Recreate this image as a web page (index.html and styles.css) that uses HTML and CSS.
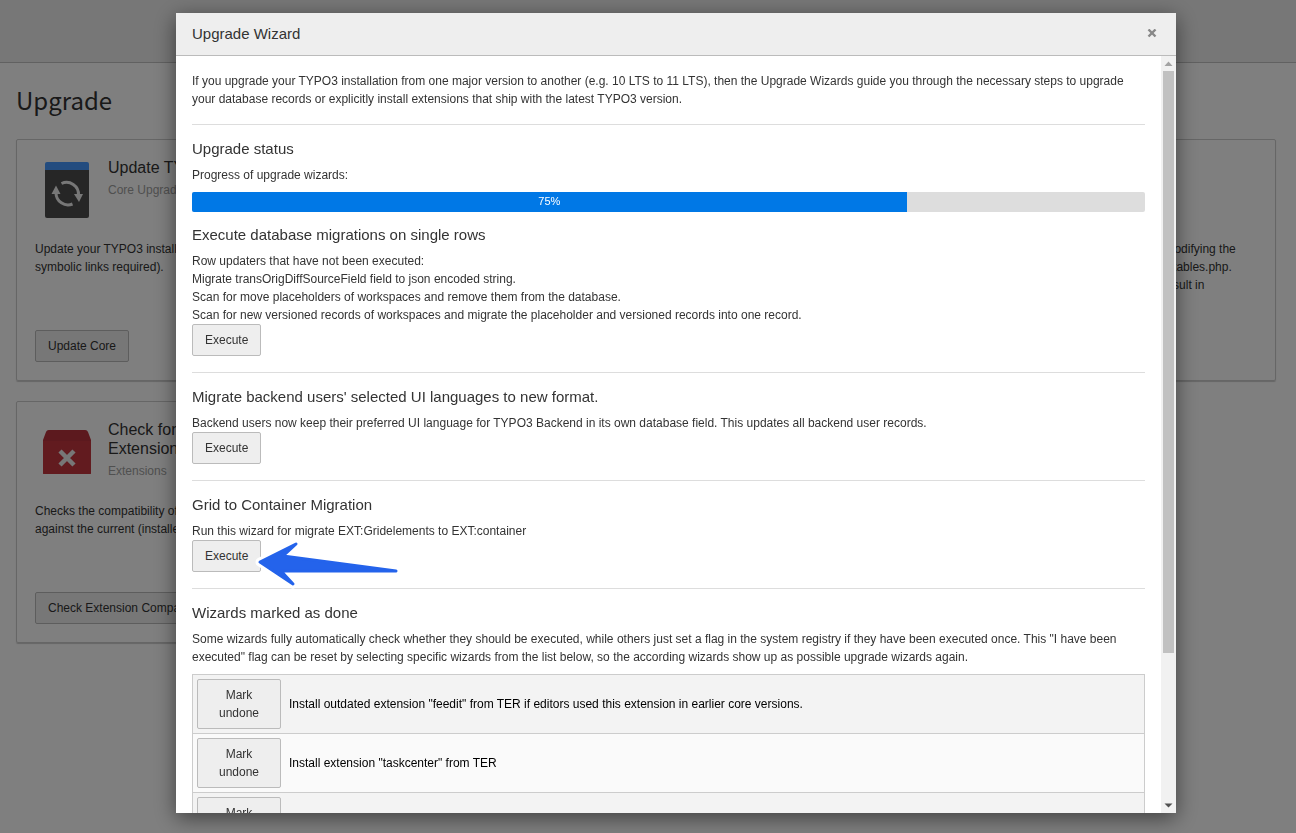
FILE: index.html
```html
<!DOCTYPE html>
<html lang="en">
<head>
    <meta charset="UTF-8">
    <meta name="viewport" content="width=device-width, initial-scale=1.0">
    <title>Upgrade</title>
    <link rel="stylesheet" href="styles.css">
</head>
<body>

    <div class="docheader"></div>

    <main class="module">
        <h1>Upgrade</h1>
        <div class="cards">
            <div class="card">
                <div class="card-header">
                    <svg class="card-icon" viewBox="0 0 64 64">
                        <path fill="#4d4d4d" d="M10 12h44v46a2 2 0 0 1-2 2H12a2 2 0 0 1-2-2z"/>
                        <path fill="#4799ff" d="M12 4h40a2 2 0 0 1 2 2v6H10V6a2 2 0 0 1 2-2z"/>
                        <g fill="none" stroke="#eee" stroke-width="3">
                            <path d="M26.500 25.500A12 12 0 0 1 43.500 37"/>
                            <path d="M37.500 46A12 12 0 0 1 21 35"/>
                        </g>
                        <path fill="#eee" d="M39 36h9L44 44zM16.500 36h9L21 27.500z"/>
                    </svg>
                    <div>
                        <h2>Update TYPO3 Core</h2>
                        <p class="card-sub">Core Upgrade</p>
                    </div>
                </div>
                <p class="card-text">Update your TYPO3 installation (no<br>symbolic links required).</p>
                <button class="btn">Update Core</button>
            </div>
            <div class="card card-last">
                <p class="card-text card-text-only">Checks if each extension is still modifying the<br>table configuration (TCA) via ext_tables.php.<br>Those later changes to it might result in</p>
            </div>
            <div class="card">
                <div class="card-header">
                    <svg class="card-icon" viewBox="0 0 64 64">
                        <path fill="#b9323c" d="M14 10h36a3 3 0 0 1 3 2l3 8v33a1 1 0 0 1-1 1H9a1 1 0 0 1-1-1V20l3-8a3 3 0 0 1 3-2z"/>
                        <path fill="#c4363f" d="M8 21h48v32a1 1 0 0 1-1 1H9a1 1 0 0 1-1-1z"/>
                        <path stroke="#eee" stroke-width="4.500" d="M25 31l14 14M39 31L25 45"/>
                    </svg>
                    <div>
                        <h2>Check for Broken Extensions</h2>
                        <p class="card-sub">Extensions</p>
                    </div>
                </div>
                <p class="card-text">Checks the compatibility of extensions<br>against the current (installed) version.</p>
                <button class="btn">Check Extension Compatibility</button>
            </div>
        </div>
    </main>

    <div class="backdrop">
        <div class="modal" role="dialog" aria-labelledby="modal-title">
            <div class="modal-header">
                <h4 id="modal-title">Upgrade Wizard</h4>
                <button class="close" aria-label="Close">
                    <svg width="10" height="10" viewBox="0 0 10 10"><path stroke="#888" stroke-width="2.4" d="M1.500 .5l7 7M8.500 .5l-7 7"/></svg>
                </button>
            </div>
            <div class="modal-main">
                <div class="modal-body">
                    <p>If you upgrade your TYPO3 installation from one major version to another (e.g. 10 LTS to 11 LTS), then the Upgrade Wizards guide you through the necessary steps to upgrade your database records or explicitly install extensions that ship with the latest TYPO3 version.</p>
                    <hr>
                    <h3>Upgrade status</h3>
                    <p>Progress of upgrade wizards:</p>
                    <div class="progress">
                        <div class="progress-bar" role="progressbar" aria-valuenow="75" style="width: 75%">75%</div>
                    </div>

                    <h3>Execute database migrations on single rows</h3>
                    <p>Row updaters that have not been executed:<br>
                    Migrate transOrigDiffSourceField field to json encoded string.<br>
                    Scan for move placeholders of workspaces and remove them from the database.<br>
                    Scan for new versioned records of workspaces and migrate the placeholder and versioned records into one record.</p>
                    <button class="btn">Execute</button>
                    <hr>

                    <h3>Migrate backend users' selected UI languages to new format.</h3>
                    <p>Backend users now keep their preferred UI language for TYPO3 Backend in its own database field. This updates all backend user records.</p>
                    <button class="btn">Execute</button>
                    <hr>

                    <h3>Grid to Container Migration</h3>
                    <p>Run this wizard for migrate EXT:Gridelements to EXT:container</p>
                    <div class="pointed">
                        <button class="btn">Execute</button>
                        <svg class="arrow" viewBox="0 0 150 54">
                            <path class="arrow-halo" d="M8 24L44 6L31 18L144 33L29 33L41 46Z"/>
                            <path class="arrow-line" d="M8 24L44 6L31 18L144 33L29 33L41 46Z"/>
                        </svg>
                    </div>
                    <hr>

                    <h3>Wizards marked as done</h3>
                    <p>Some wizards fully automatically check whether they should be executed, while others just set a flag in the system registry if they have been executed once. This "I have been executed" flag can be reset by selecting specific wizards from the list below, so the according wizards show up as possible upgrade wizards again.</p>
                    <table class="done">
                        <tr>
                            <td class="done-action"><button class="btn">Mark undone</button></td>
                            <td>Install outdated extension "feedit" from TER if editors used this extension in earlier core versions.</td>
                        </tr>
                        <tr>
                            <td class="done-action"><button class="btn">Mark undone</button></td>
                            <td>Install extension "taskcenter" from TER</td>
                        </tr>
                        <tr>
                            <td class="done-action"><button class="btn">Mark undone</button></td>
                            <td></td>
                        </tr>
                    </table>
                </div>
                <div class="scrollbar" aria-hidden="true">
                    <svg width="15" height="15" viewBox="0 0 15 15"><path fill="#a3a3a3" d="M7.500 5.500l4 4.500h-8z"/></svg>
                    <div class="scroll-track"><div class="scroll-thumb"></div></div>
                    <svg width="15" height="15" viewBox="0 0 15 15"><path fill="#505050" d="M7.500 9.500l-4-4h8z"/></svg>
                </div>
            </div>
        </div>
    </div>

</body>
</html>
```
FILE: styles.css
```css
* { box-sizing: border-box; }
body { margin: 0; height: 100vh; overflow: hidden; font-family: "Liberation Sans", Arial, sans-serif; font-size: 12px; line-height: 18px; color: #333; background: #fff; }
h1, h2, h3, h4, p { margin: 0; font-weight: normal; }

.btn { font: inherit; color: #333; background: #eee; border: 1px solid #bbb; border-radius: 2px; padding: 6px 12px; white-space: nowrap; }

/* module behind the modal */
.docheader { height: 63px; background: #eee; border-bottom: 1px solid #c3c3c3; }
.module { padding: 20px 20px 0 16px; }
h1 { font-family: "Noto Sans CJK SC", "Noto Sans", sans-serif; font-size: 24px; line-height: 34px; margin-bottom: 22px; }
.cards { display: grid; grid-template-columns: repeat(4, 1fr); gap: 20px; }
.card { min-width: 0; border: 1px solid #ccc; border-radius: 2px; box-shadow: 0 1px 1px #ccc; padding: 18px; }
.card-last { grid-column: 4; }
.card-header { display: flex; gap: 9px; height: 64px; margin-bottom: 18px; }
.card-icon { width: 64px; height: 64px; flex: none; }
h2 { font-size: 16px; line-height: 19px; margin-bottom: 4px; }
.card-sub { color: #a0a0a0; }
.card-text { min-height: 90px; white-space: nowrap; }
.card-text-only { margin-top: 82px; }

/* modal */
.backdrop { position: fixed; inset: 0; display: flex; padding: 13px 120px 20px 176px; background: rgba(0, 0, 0, 0.5); }
.modal { flex: 1; min-width: 0; display: flex; flex-direction: column; background: #fff; box-shadow: 0 5px 20px rgba(0, 0, 0, 0.5); }
.modal-header { display: flex; align-items: center; justify-content: space-between; padding: 12px 16px; background: #eee; border-bottom: 1px solid #bbb; }
h4 { font-size: 15px; }
.close { display: flex; padding: 3px; border: 0; background: none; }
.modal-main { flex: 1; min-height: 0; display: flex; }
.modal-body { flex: 1; min-width: 0; padding: 16px; overflow-y: auto; scrollbar-width: none; }
h3 { font-size: 15px; line-height: 16px; margin-bottom: 9px; }
hr { margin: 16px 0; border: 0; border-top: 1px solid #ddd; }
.modal-body .btn { display: block; }

.progress { height: 20px; margin: 8px 0 15px; background: #ddd; border-radius: 2px; overflow: hidden; }
.progress-bar { height: 20px; background: #0078e6; color: #fff; font-size: 11px; text-align: center; }

.pointed { position: relative; }
.arrow { position: absolute; left: 60px; top: -2px; width: 150px; height: 54px; }
.arrow path { stroke-linejoin: round; }
.arrow-halo { fill: #fff; stroke: #fff; stroke-width: 9; }
.arrow-line { fill: #2463eb; stroke: #2463eb; stroke-width: 3; }

.done { width: 100%; margin-top: 8px; border-collapse: collapse; border: 1px solid #ccc; color: #000; }
.done tr { background: #f3f3f3; border-bottom: 1px solid #ccc; }
.done tr:nth-child(even) { background: #fafafa; }
.done td { padding: 4px; }
.done-action { width: 92px; }
.done .btn { width: 84px; white-space: normal; }

.scrollbar { width: 15px; display: flex; flex-direction: column; background: #f1f1f1; }
.scroll-track { flex: 1; padding: 0 2px; }
.scroll-thumb { height: 80%; background: #c1c1c1; }
```
